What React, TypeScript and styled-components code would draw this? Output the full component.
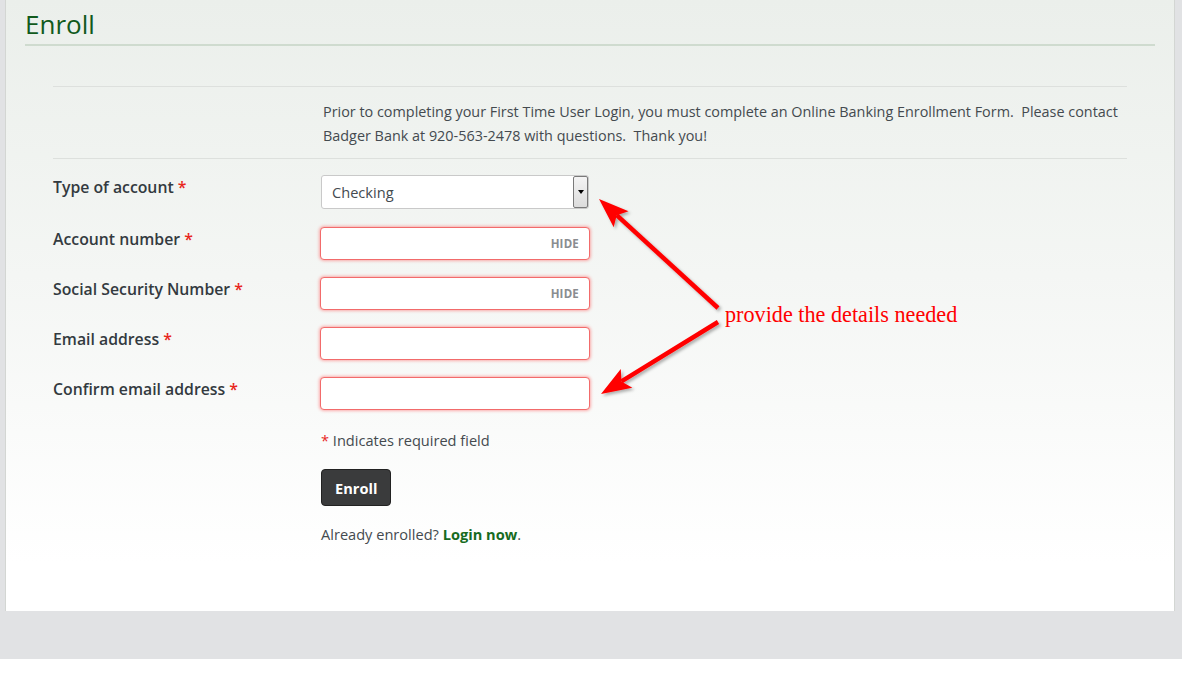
import React from "react";
import styled, { createGlobalStyle } from "styled-components";

const GlobalStyle = createGlobalStyle`
  html, body {
    margin: 0;
    padding: 0;
    background: #ffffff;
    font-family: "Open Sans", "Noto Sans", Arial, sans-serif;
  }
`;

const Page = styled.div`
  background: #e1e2e4;
  padding: 0 7px 48px 5px;
`;

const Panel = styled.div`
  position: relative;
  background: linear-gradient(180deg, #ebefeb 0%, #f4f6f4 45%, #ffffff 92%);
  border-left: 1px solid #d3d6d3;
  border-right: 1px solid #d3d6d3;
  padding: 0 19px 67px;
`;

const Title = styled.h1`
  margin: 0;
  padding: 6px 0 2px;
  font-size: 26px;
  line-height: 36px;
  font-weight: 500;
  color: #115a1c;
  border-bottom: 2px solid #cfdbcf;
`;

const Form = styled.div`
  margin: 40px 28px 0;
`;

const Grid = styled.div`
  display: grid;
  grid-template-columns: 267px 1fr;
`;

const InfoSection = styled(Grid)`
  border-top: 1px solid #dde0dd;
  border-bottom: 1px solid #dde0dd;
  padding: 13px 0 10px;
`;

const InfoText = styled.p`
  grid-column: 2;
  margin: 0;
  padding-left: 3px;
  font-size: 14.4px;
  line-height: 24px;
  color: #444a4f;
`;

const Fields = styled.div`
  padding-top: 16px;
`;

const Row = styled(Grid)<{ $gap: number }>`
  margin-bottom: ${({ $gap }) => $gap}px;
  &:last-child {
    margin-bottom: 0;
  }
`;

const Label = styled.label`
  padding-top: 2px;
  font-size: 15.8px;
  line-height: 20px;
  font-weight: 600;
  color: #333a40;
`;

const Star = styled.span`
  color: #e8261c;
`;

const Select = styled.div`
  width: 268px;
  height: 34px;
  margin-left: 1px;
  box-sizing: border-box;
  display: flex;
  align-items: center;
  background: #fff;
  border: 1px solid #c9c9c9;
  border-radius: 3px;
  font-size: 14.6px;
  color: #444a4f;
  padding-left: 10px;
`;

const SelectValue = styled.span`
  flex: 1;
`;

const SelectButton = styled.span`
  width: 15px;
  height: 32px;
  box-sizing: border-box;
  display: flex;
  align-items: center;
  justify-content: center;
  border: 1px solid #7a7a7a;
  border-radius: 2px;
  background: linear-gradient(180deg, #f4f4f4 0%, #dcdcdc 100%);
`;

const Caret = styled.span`
  width: 0;
  height: 0;
  border-left: 3px solid transparent;
  border-right: 3px solid transparent;
  border-top: 4px solid #000;
`;

const InputBox = styled.div`
  width: 270px;
  height: 33px;
  box-sizing: border-box;
  display: flex;
  align-items: center;
  justify-content: flex-end;
  padding-right: 10px;
  background: #fff;
  border: 1px solid #f26b6b;
  border-radius: 4px;
  box-shadow: 0 0 3px 1px rgba(255, 80, 80, 0.45);
`;

const HideText = styled.span`
  font-size: 11.5px;
  font-weight: 700;
  color: #8a8d90;
  letter-spacing: 0.2px;
`;

const Action = styled.div`
  grid-column: 2;
  display: flex;
  flex-direction: column;
  align-items: flex-start;
`;

const Note = styled.div`
  margin-top: 20px;
  padding-left: 1px;
  font-size: 14.6px;
  line-height: 20px;
  color: #444a4f;
`;

const Button = styled.button`
  margin-top: 19px;
  margin-left: 1px;
  height: 37px;
  padding: 0 13px;
  background: #3a3b3c;
  border: 1px solid #222;
  border-radius: 4px;
  color: #fff;
  font-family: inherit;
  font-size: 14.6px;
  font-weight: 700;
`;

const Already = styled.div`
  margin-top: 18px;
  padding-left: 1px;
  font-size: 14.6px;
  line-height: 20px;
  color: #444a4f;
`;

const LoginLink = styled.a`
  color: #176b1f;
  font-weight: 700;
  text-decoration: none;
`;

const Annotation = styled.svg`
  position: absolute;
  left: -5px;
  top: 0;
  pointer-events: none;
  overflow: visible;
`;

const AnnotationText = styled.text`
  font-family: "Liberation Serif", "Times New Roman", serif;
  font-size: 22.2px;
  fill: #ff0000;
`;

const fields = [
  { label: "Account number", hide: true },
  { label: "Social Security Number", hide: true },
  { label: "Email address", hide: false },
  { label: "Confirm email address", hide: false },
];

const intro =
  "Prior to completing your First Time User Login, you must complete an Online Banking Enrollment Form.\u00a0 Please contact Badger Bank at 920-563-2478 with questions.\u00a0 Thank you!";

const Arrow = ({ x1, y1, x2, y2 }: { x1: number; y1: number; x2: number; y2: number }) => {
  const a = Math.atan2(y2 - y1, x2 - x1);
  const len = 30;
  const w = 11;
  const bx = x2 - Math.cos(a) * len;
  const by = y2 - Math.sin(a) * len;
  const px = -Math.sin(a) * w;
  const py = Math.cos(a) * w;
  const sx = x2 - Math.cos(a) * (len - 6);
  const sy = y2 - Math.sin(a) * (len - 6);
  return (
    <g filter="url(#shadow)">
      <line x1={x1} y1={y1} x2={sx} y2={sy} stroke="#ff0000" strokeWidth={4.5} />
      <polygon points={`${x2},${y2} ${bx + px},${by + py} ${sx},${sy} ${bx - px},${by - py}`} fill="#ff0000" />
    </g>
  );
};

export default function App() {
  return (
    <>
      <GlobalStyle />
      <Page>
        <Panel>
          <Title>Enroll</Title>
          <Form>
            <InfoSection>
              <InfoText>{intro}</InfoText>
            </InfoSection>

            <Fields>
              <Row $gap={18}>
                <Label>
                  Type of account <Star>*</Star>
                </Label>
                <Select>
                  <SelectValue>Checking</SelectValue>
                  <SelectButton>
                    <Caret />
                  </SelectButton>
                </Select>
              </Row>

              {fields.map((f) => (
                <Row $gap={17} key={f.label}>
                  <Label>
                    {f.label} <Star>*</Star>
                  </Label>
                  <InputBox>{f.hide && <HideText>HIDE</HideText>}</InputBox>
                </Row>
              ))}
            </Fields>

            <Grid>
              <Action>
                <Note>
                  <Star>*</Star> Indicates required field
                </Note>
                <Button>Enroll</Button>
                <Already>
                  Already enrolled? <LoginLink href="#">Login now</LoginLink>.
                </Already>
              </Action>
            </Grid>
          </Form>

          <Annotation width="1182" height="611">
            <defs>
              <filter id="shadow" x="-20%" y="-20%" width="140%" height="140%">
                <feDropShadow dx="2" dy="2" stdDeviation="1.5" floodColor="#000" floodOpacity="0.3" />
              </filter>
            </defs>
            <Arrow x1={717} y1={308} x2={598} y2={199} />
            <Arrow x1={717} y1={322} x2={600} y2={394} />
            <AnnotationText x={724} y={322}>
              provide the details needed
            </AnnotationText>
          </Annotation>
        </Panel>
      </Page>
    </>
  );
}
